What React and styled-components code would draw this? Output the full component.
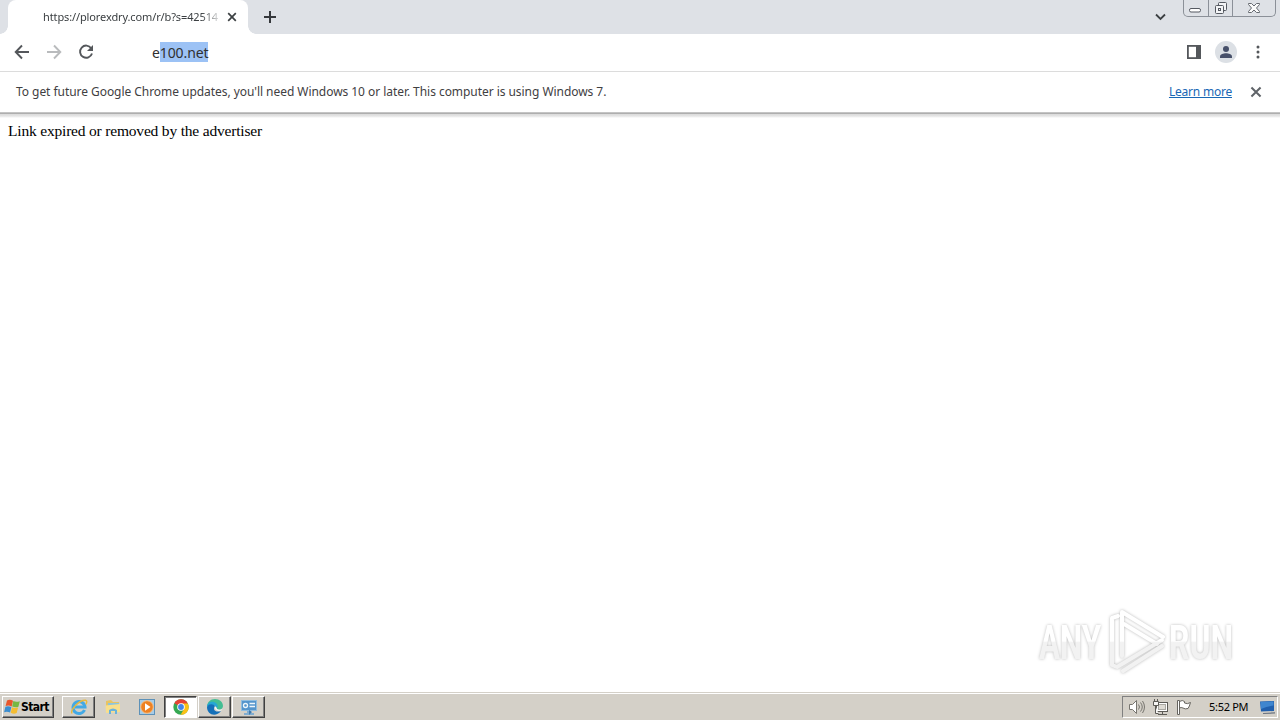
import React from 'react'
import styled, { createGlobalStyle } from 'styled-components'

const App = () => {
  return (
    <>
      <Global/>
      <Desktop>
        <TabStrip>
          <Tab>
            <TabTitle>https://plorexdry.com/r/b?s=42514</TabTitle>
            <IconCross size={10} color='#3c4043' weight={1.7}/>
          </Tab>
          <NewTab><IconPlus/></NewTab>
          <TabSearch><IconChevron/></TabSearch>
          <Controls>
            <Control $width='25px'><IconMinimize/></Control>
            <Control $width='25px'><IconRestore/></Control>
            <Control $width='42px'><IconClose/></Control>
          </Controls>
        </TabStrip>

        <Toolbar>
          <Navigation>
            <IconArrow color='#54575b'/>
            <IconArrow color='#b9bbbd' flip/>
            <IconReload/>
          </Navigation>
          <Address>e<Selected>100.net</Selected></Address>
          <Actions>
            <IconPanel/>
            <Avatar><IconPerson/></Avatar>
            <IconDots/>
          </Actions>
        </Toolbar>

        <InfoBar>
          <InfoText>To get future Google Chrome updates, you'll need Windows 10 or later. This computer is using Windows 7.</InfoText>
          <LearnMore>Learn more</LearnMore>
          <IconCross size={12} color='#5f6368' weight={2}/>
        </InfoBar>

        <Page>
          <Message>Link expired or removed by the advertiser</Message>
          <Watermark><LogoAnyRun/></Watermark>
        </Page>

        <Taskbar>
          <StartButton>
            <IconWindows/>
            <StartText>Start</StartText>
          </StartButton>
          <Tasks>
            <Task $raised><IconExplorer/></Task>
            <Task><IconFolder/></Task>
            <Task><IconPlayer/></Task>
            <Task $active><IconChrome/></Task>
            <Task $raised><IconEdge/></Task>
            <Task $raised><IconSettings/></Task>
          </Tasks>
          <Tray>
            <IconSpeaker/>
            <IconNetwork/>
            <IconFlag/>
            <Clock>5:52 PM</Clock>
            <IconDesktop/>
          </Tray>
        </Taskbar>
      </Desktop>
    </>
  )
}
export default App


// I C O N S ------------------------------->

const IconCross = ({ size, color, weight }) => (
  <svg width={size} height={size} viewBox='0 0 10 10'>
    <path d='M1.2 1.2l7.6 7.6M8.8 1.2l-7.6 7.6' stroke={color} strokeWidth={weight * 10 / size}/>
  </svg>
)

const IconPlus = () => (
  <svg width='12' height='12' viewBox='0 0 12 12'>
    <path d='M6 0v12M0 6h12' stroke='#35383c' strokeWidth='2'/>
  </svg>
)

const IconChevron = () => (
  <svg width='11' height='8' viewBox='0 0 11 8' fill='none'>
    <path d='M1 1.5l4.5 4.5L10 1.5' stroke='#3c4043' strokeWidth='1.8'/>
  </svg>
)

const IconMinimize = () => (
  <svg width='13' height='17' viewBox='0 0 13 17'>
    <rect x='.5' y='8.5' width='11' height='3.5' rx='1.5' fill='#fff' stroke='#555961'/>
  </svg>
)

const IconRestore = () => (
  <svg width='14' height='17' viewBox='0 0 14 17' fill='#f3f4f6' stroke='#555961'>
    <rect x='4.5' y='2.5' width='8' height='8' rx='1'/>
    <rect x='1.5' y='5.5' width='8' height='8' rx='1'/>
    <rect x='4.5' y='8.5' width='2' height='2'/>
  </svg>
)

const IconClose = () => (
  <svg width='14' height='17' viewBox='0 0 14 17'>
    <path d='M1.5 3.5h3L7 6l2.5-2.5h3v1L9.5 8l3 3.5v1h-3L7 10l-2.5 2.5h-3v-1L4.5 8l-3-3.5z' fill='#fafafa' stroke='#666a71'/>
  </svg>
)

const IconArrow = ({ color, flip }) => (
  <svg width='16' height='16' viewBox='0 0 16 16' fill='none'>
    <path
      d={flip ? 'M1 8h13M8 1.5L14.3 8 8 14.5' : 'M15 8H2M8 1.5L1.7 8 8 14.5'}
      stroke={color}
      strokeWidth='1.9'
    />
  </svg>
)

const IconReload = () => (
  <svg width='16' height='16' viewBox='0 0 16 16' fill='none'>
    <path d='M13.2 4.2A6.1 6.1 0 1 0 14 9.5' stroke='#54575b' strokeWidth='1.9'/>
    <path d='M15 1v6H9z' fill='#54575b'/>
  </svg>
)

const IconPanel = () => (
  <svg width='14' height='14' viewBox='0 0 14 14'>
    <rect x='.9' y='.9' width='12.2' height='12.2' fill='#fff' stroke='#54575b' strokeWidth='1.8'/>
    <path d='M9 1h4v12H9z' fill='#54575b'/>
  </svg>
)

const IconPerson = () => (
  <svg width='12' height='12' viewBox='0 0 12 12' fill='#47506a'>
    <circle cx='6' cy='3' r='3'/>
    <path d='M0 12v-1.500C0 8.300 3.500 7.300 6 7.300s6 1 6 3.200V12z'/>
  </svg>
)

const IconDots = () => (
  <svg width='4' height='14' viewBox='0 0 4 14' fill='#54575b'>
    <circle cx='2' cy='2' r='1.5'/>
    <circle cx='2' cy='7' r='1.5'/>
    <circle cx='2' cy='12' r='1.5'/>
  </svg>
)

const IconWindows = () => (
  <svg width='17' height='16' viewBox='0 0 17 16'>
    <path d='M3 1.5c2-1 4-.8 6 .3L7.700 7.500C5.700 6.300 3.700 6.200 1.600 7z' fill='#e9562b'/>
    <path d='M9.300 2c2 1 4 1 6.500.2l-1.400 5.600c-2 .8-4 .7-6.200-.3z' fill='#77b843'/>
    <path d='M1.400 7.700c2-.9 4-.7 6 .4l-1.300 5.500c-2-1.100-4-1.200-6-.4z' fill='#3c8ed0'/>
    <path d='M8 8.300c2 1 4 1 6.100.3l-1.400 5.500c-2 .8-4 .7-6-.3z' fill='#f5bd32'/>
  </svg>
)

const IconExplorer = () => (
  <svg width='18' height='18' viewBox='0 0 18 18' fill='none'>
    <path d='M14.500 12A6 6 0 1 1 15 9H5' stroke='#43a9e5' strokeWidth='3'/>
    <path d='M2 15.500C0 12 9 2 15.500 2.300c2 .3 1.300 2.500.3 4' stroke='#e9b93b' strokeWidth='1.4'/>
  </svg>
)

const IconFolder = () => (
  <svg width='18' height='18' viewBox='0 0 18 18'>
    <path d='M2 3l5-1 2 2h6v10H2z' fill='#e8c462'/>
    <path d='M4 5h11v9H4z' fill='#8cc5dd'/>
    <path d='M1.500 7.500L16 6v8l-14 1z' fill='#f8df8c'/>
    <path d='M5 16v-4q4-3 8 0v4h-2v-3H7v3z' fill='#69b2db'/>
  </svg>
)

const IconPlayer = () => (
  <svg width='18' height='18' viewBox='0 0 18 18'>
    <rect x='1.5' y='1.5' width='15' height='15' fill='#a7cce7' stroke='#5d91b8'/>
    <circle cx='9' cy='9' r='6.3' fill='#ee8122' stroke='#f5c28a'/>
    <path d='M7 5.300v7.400L12.500 9z' fill='#fff'/>
  </svg>
)

const IconChrome = () => (
  <svg width='18' height='18' viewBox='0 0 18 18'>
    <circle cx='9' cy='9' r='7.7' fill='#35a852'/>
    <path d='M9 9L2.300 5.200A7.700 7.700 0 0 1 15.700 5.200z' fill='#e54335'/>
    <path d='M9 5.400h6.800A7.700 7.700 0 0 1 8.600 16.700L12 11z' fill='#fbc116'/>
    <circle cx='9' cy='9' r='3.8' fill='#fff'/>
    <circle cx='9' cy='9' r='2.9' fill='#4285e8'/>
  </svg>
)

const IconEdge = () => (
  <svg width='18' height='18' viewBox='0 0 18 18'>
    <path d='M1 9C1 4 4.500 1 9 1s8 3 8 7c0 3-3 4.500-6 3.500C11 5 3 5 1 9z' fill='#43bd93'/>
    <path d='M1 9c0-5 6-7 9.500-3.500 1.500 1.700 1.500 3.500.5 4.500C8 6 3 6.500 1 9z' fill='#26a7d4'/>
    <path d='M1 9c2-4 7-3 8-.5-3 3 1 6.500 6 4.500C10 19.500 1 17 1 9z' fill='#1470b9'/>
    <path d='M8.500 8.500q2 0 2.500 2.500 3 1.500 5.500 0-1 2-3.500 2-4-.5-4.500-4.500z' fill='#f0f7f8'/>
  </svg>
)

const IconSettings = () => (
  <svg width='18' height='18' viewBox='0 0 18 18'>
    <rect x='1.5' y='2.5' width='15' height='10' fill='#5595cc' stroke='#8fbcdf'/>
    <circle cx='5.5' cy='7.5' r='2' fill='none' stroke='#eef6fb' strokeWidth='1.3'/>
    <path d='M9.500 5.500H15M9.500 8.500H15' stroke='#eef6fb' strokeWidth='1.3'/>
    <path d='M7 13h4v2h3v2H4v-2h3z' fill='#80acd0'/>
    <path d='M9 12l3 2-3 3z' fill='#3d7ab0'/>
  </svg>
)

const IconSpeaker = () => (
  <svg width='17' height='16' viewBox='0 0 17 16' fill='none' stroke='#77756f'>
    <path d='M1.500 5.500h3l4-4v13l-4-4h-3z' fill='#fff'/>
    <path d='M10.500 5.500q2 2.500 0 5M12.500 3.500q3.500 4.500 0 9M14.500 2q4 6 0 12'/>
  </svg>
)

const IconNetwork = () => (
  <svg width='17' height='17' viewBox='0 0 17 17' fill='#fff' stroke='#5d5b56'>
    <rect x='4.5' y='3.5' width='11' height='9'/>
    <rect x='6.5' y='5.5' width='7' height='5' fill='#dedbd4' stroke='#aaa8a2'/>
    <path d='M6 15.500h9M10.500 13v2'/>
    <path d='M1.500 2.500h5v4h-5zM2.500 0v2M5.500 0v2M3.500 7v7.500h3' fill='#f7f6f4'/>
  </svg>
)

const IconFlag = () => (
  <svg width='17' height='17' viewBox='0 0 17 17' fill='#fff' stroke='#66645f'>
    <path d='M3.500 2.500q3-2 5 0v1.500q3 1.500 6-.5-1 4-2.500 6-3 1-5-.5-2-1-3.500 0z'/>
    <path d='M1.500 1.500h2v14h-2z'/>
  </svg>
)

const IconDesktop = () => (
  <svg width='17' height='16' viewBox='0 0 17 16'>
    <path d='M1 2.500L15 2v10L2 12.500z' fill='#205fad'/>
    <path d='M1.500 3l13-.5v4Q8 7 2 10z' fill='#3f86cf'/>
    <path d='M4 14l12-.8v1.300L4 15z' fill='#6a7380'/>
  </svg>
)

const LogoAnyRun = () => (
  <svg width='220' height='78' viewBox='0 0 220 78'>
    <defs>
      <linearGradient id='shade' x1='0' y1='0' x2='0' y2='78' gradientUnits='userSpaceOnUse'>
        <stop offset='.5' stopColor='#fff'/>
        <stop offset='.52' stopColor='#f2f2f2'/>
      </linearGradient>
    </defs>
    <LogoText x='9' y='57' textLength='62' lengthAdjust='spacingAndGlyphs'>ANY</LogoText>
    <LogoMark>
      <path d='M88 14l-6 2v47l5 2 45-27'/>
      <path d='M92 54V10l41 25'/>
      <path d='M94 22l33 20'/>
      <path d='M132 44L93 69'/>
    </LogoMark>
    <LogoText x='139' y='57' textLength='64' lengthAdjust='spacingAndGlyphs'>RUN</LogoText>
  </svg>
)

const LogoText = styled.text`
  font: 700 49px Roboto, sans-serif;
  fill: url(#shade);
  filter: drop-shadow(0 0 1.5px #bcbcbc);
`

const LogoMark = styled.g`
  fill: none;
  stroke: url(#shade);
  stroke-width: 4px;
  stroke-linecap: round;
  stroke-linejoin: round;
  filter: drop-shadow(0 0 1.5px #b8b8b8);
`


// P A G E ------------------------------->

const Global = createGlobalStyle`
  * {
    box-sizing: border-box;
  }

  body {
    margin: 0;
    overflow: hidden;
    font-family: 'Noto Sans', sans-serif;
  }

  svg {
    display: block;
    flex-shrink: 0;
  }
`

const Desktop = styled.div`
  width: 1280px;
  height: 720px;
  display: flex;
  flex-direction: column;
  background: #fff;
`


// T A B S ------------------------------->

const TabStrip = styled.div`
  display: flex;
  height: 34px;
  background: #dee1e6;
`

const Tab = styled.div`
  display: flex;
  align-items: center;
  width: 240px;
  margin-left: 8px;
  padding: 0 11px 0 35px;
  background: #fff;
  border-radius: 8px 8px 0 0;
  position: relative;

  &::before,
  &::after {
    content: '';
    position: absolute;
    bottom: 0;
    width: 8px;
    height: 8px;
  }

  &::before {
    left: -8px;
    background: radial-gradient(circle at 0 0, #dee1e6 7.5px, #fff 8px);
  }

  &::after {
    right: -8px;
    background: radial-gradient(circle at 100% 0, #dee1e6 7.5px, #fff 8px);
  }
`

const TabTitle = styled.span`
  width: 176px;
  margin-right: 8px;
  padding-bottom: 1px;
  white-space: nowrap;
  font-size: 11px;
  letter-spacing: -0.12px;
  color: #3c4043;
  -webkit-mask-image: linear-gradient(90deg, #000 158px, transparent 180px);
`

const NewTab = styled.div`
  display: flex;
  align-items: center;
  margin-left: 16px;
`

const TabSearch = styled.div`
  display: flex;
  align-items: center;
  margin-left: auto;
  margin-right: 17px;
`

const Controls = styled.div`
  display: flex;
  width: 93px;
  height: 17px;
  margin-right: 4px;
  border: 1px solid #8b9098;
  border-top: none;
  border-radius: 0 0 5px 5px;
`

const Control = styled.div`
  display: flex;
  justify-content: center;
  width: ${({ $width }) => $width};
  border-right: 1px solid #8b9098;

  &:last-child {
    border: none;
  }
`


// T O O L B A R ------------------------------->

const Toolbar = styled.div`
  display: flex;
  align-items: center;
  height: 38px;
  padding: 0 20px 1px 14px;
  border-bottom: 1px solid #dcdcdc;
`

const Navigation = styled.div`
  display: flex;
  gap: 16px;
`

const Address = styled.div`
  display: flex;
  margin-left: 58px;
  padding-top: 1px;
  font-size: 14px;
  letter-spacing: -0.1px;
  line-height: 21px;
  color: #303030;
`

const Selected = styled.span`
  height: 20px;
  background: #9cc2f5;
`

const Actions = styled.div`
  display: flex;
  align-items: center;
  margin-left: auto;
  gap: 14px;

  > svg:last-child {
    margin-left: 5px;
  }
`

const Avatar = styled.div`
  display: flex;
  align-items: center;
  justify-content: center;
  width: 22px;
  height: 22px;
  border-radius: 50%;
  background: #dce0e5;
`


// I N F O  B A R ------------------------------->

const InfoBar = styled.div`
  display: flex;
  align-items: center;
  height: 40px;
  padding: 0 18px 0 16px;
  font-size: 12px;
  white-space: nowrap;
`

const InfoText = styled.span`
  padding-bottom: 2px;
  letter-spacing: -0.05px;
  color: #3f4042;
`

const LearnMore = styled.a`
  margin-left: auto;
  margin-right: 18px;
  padding-bottom: 2px;
  letter-spacing: -0.22px;
  color: #1967b5;
  text-decoration: underline;
`

const Page = styled.main`
  flex: 1;
  position: relative;
  padding: 10px 8px;
  background: linear-gradient(#c4c4c4 1px, #a8a8a8 1px, #b4b4b4 2px, #dadada 2px, #e4e4e4 4px, #fff 6px);
`

const Message = styled.p`
  margin: 0;
  font-family: 'Liberation Serif', serif;
  font-size: 15.5px;
  letter-spacing: -0.19px;
  line-height: 18px;
  color: #000;
`

const Watermark = styled.div`
  position: absolute;
  right: 30px;
  bottom: 12px;
`


// T A S K B A R ------------------------------->

const Taskbar = styled.div`
  display: flex;
  align-items: center;
  height: 28px;
  padding: 1px 2px 0;
  background: #d4d0c8;
  border-top: 1px solid #d4d0c8;
  box-shadow: inset 0 1px #fff;
`

const StartButton = styled.div`
  display: flex;
  align-items: center;
  width: 52px;
  height: 22px;
  padding-left: 1px;
  border: 1px solid;
  border-color: #fff #404040 #404040 #fff;
  box-shadow: inset -1px -1px #808080;
`

const StartText = styled.span`
  font: 700 12px 'DejaVu Sans Condensed', 'DejaVu Sans', sans-serif;
  letter-spacing: -0.6px;
  color: #000;
`

const Tasks = styled.div`
  display: flex;
  gap: 1px;
  margin-left: 8px;
`

const Task = styled.div`
  display: flex;
  align-items: center;
  justify-content: center;
  width: 33px;
  height: 22px;
  border: 1px solid transparent;
  ${({ $raised }) => $raised && `
    border-color: #fff #404040 #404040 #fff;
    box-shadow: inset -1px -1px #808080;
  `}
  ${({ $active }) => $active && `
    background: #fff;
    border-color: #404040 #fff #fff #404040;
    box-shadow: inset 1px 1px #808080;
  `}
`

const Tray = styled.div`
  display: flex;
  align-items: center;
  gap: 7px;
  width: 156px;
  height: 22px;
  margin-left: auto;
  padding-left: 5px;
  border: 1px solid;
  border-color: #808080 #fff #fff #808080;
`

const Clock = styled.span`
  width: 42px;
  margin-left: 9px;
  margin-right: 1px;
  padding-bottom: 1px;
  font-size: 11px;
  letter-spacing: -0.3px;
  white-space: nowrap;
  color: #000;
`
